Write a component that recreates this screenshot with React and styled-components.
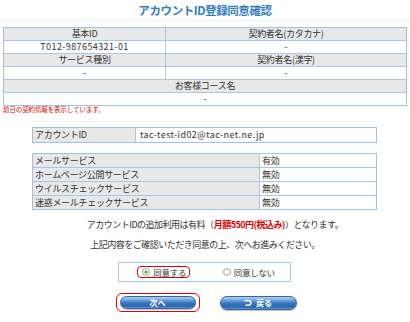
import React from 'react';
import styled, { createGlobalStyle } from 'styled-components';

const Global = createGlobalStyle`
  html, body { margin: 0; padding: 0; background: #fff; }
  body { font-family: "Noto Sans CJK JP", "Noto Sans", sans-serif; color: #333; }
`;

const Page = styled.div`
  width: 410px;
  height: 322px;
  overflow: hidden;
  display: flex;
  flex-direction: column;
`;

const Title = styled.h1`
  margin: 0;
  height: 20px;
  border-bottom: 1px solid #e9eff5;
  font-size: 11.5px;
  line-height: 20px;
  font-weight: 700;
  color: #2f7cc5;
  text-align: center;
  letter-spacing: -0.4px;
`;

const Grid = styled.div`
  display: grid;
  grid-template-columns: ${(p) => p.$cols};
  grid-auto-rows: ${(p) => p.$row}px;
  gap: 1px;
  background: #a4c8e8;
  border: 1px solid #9cc2e6;
  margin: ${(p) => p.$margin};
  width: ${(p) => p.$width}px;
  box-sizing: border-box;
`;

const Cell = styled.div`
  background: ${(p) => (p.$head ? '#e8e8e8' : '#fff')};
  grid-column: ${(p) => (p.$full ? '1 / -1' : 'auto')};
  text-align: ${(p) => (p.$left ? 'left' : 'center')};
  padding-left: ${(p) => (p.$left ? p.$pad || 2 : 0)}px;
  font-size: 9px;
  line-height: ${(p) => p.$lh || 12}px;
  letter-spacing: ${(p) => (p.$latin ? '0.4px' : '-0.3px')};
  color: #333;
  white-space: nowrap;
  overflow: hidden;
`;

const Note = styled.div`
  margin: 0 0 0 3px;
  font-size: 6.4px;
  line-height: 8px;
  color: #d40000;
`;

const Faint = styled.div`
  margin: 7px 0 0 32px;
  width: 345px;
  height: 1px;
  background: #eef3f8;
`;

const Message = styled.p`
  margin: ${(p) => p.$mt}px 0 0;
  font-size: 9px;
  line-height: 12px;
  letter-spacing: -0.5px;
  text-align: center;
  color: #333;
  padding-left: ${(p) => p.$shift || 0}px;
`;

const Price = styled.span`
  color: #e00000;
  font-weight: 700;
`;

const RadioBox = styled.div`
  margin: 11px 0 0 118px;
  width: 173px;
  height: 20px;
  box-sizing: border-box;
  border: 1px solid #a4c8e8;
  display: grid;
  grid-template-columns: 1fr 1fr;
  align-items: center;
  justify-items: center;
`;

const Option = styled.label`
  display: flex;
  align-items: center;
  gap: 3px;
  height: 12px;
  box-sizing: border-box;
  padding: 0 3px 0 4px;
  border: 1px solid ${(p) => (p.$marked ? '#e00000' : 'transparent')};
  border-radius: 4px;
  font-size: 8.5px;
  letter-spacing: -0.3px;
  color: #333;
  margin-left: ${(p) => p.$ml || 0}px;
`;

const Buttons = styled.div`
  margin-top: 11px;
  display: flex;
  justify-content: center;
  align-items: center;
  gap: 20px;
  padding-left: 2px;
`;

const Focus = styled.div`
  width: 84px;
  height: 19px;
  box-sizing: border-box;
  border: 1.5px solid #e00000;
  border-radius: 6px;
  display: flex;
  align-items: center;
  justify-content: center;
`;

const Pill = styled.button`
  width: ${(p) => p.$w}px;
  height: ${(p) => p.$h}px;
  box-sizing: border-box;
  padding: 0;
  border: 1px solid #2f64a4;
  border-radius: 7px;
  background: linear-gradient(#b3d1f0 0%, #6b9fdb 30%, #3574bf 55%, #2b66ae 85%, #6a9ed8 100%);
  color: #fff;
  font-family: "Noto Sans CJK JP", sans-serif;
  font-size: 8px;
  font-weight: 700;
  display: flex;
  align-items: center;
  justify-content: center;
  gap: 4px;
  box-shadow: 0 1px 1px rgba(0, 0, 0, 0.25);
`;

const RadioIcon = ({ checked }) => (
  <svg width="8" height="8" viewBox="0 0 8 8">
    <circle cx="4" cy="4" r="3.4" fill="#fff" stroke="#8a8a8a" strokeWidth="0.8" />
    {checked && <circle cx="4" cy="4" r="1.6" fill="#3aa83a" />}
  </svg>
);

const BackIcon = () => (
  <svg width="8" height="8" viewBox="0 0 8 8">
    <path d="M1.5 1.6 H4.6 A2.3 2.3 0 0 1 4.6 6.3 H1.6" fill="none" stroke="#fff" strokeWidth="1.4" />
    <path d="M0.3 1.6 L2.4 0.2 L2.4 3 Z" fill="#fff" />
  </svg>
);

const services = [
  { name: 'メールサービス', state: '有効' },
  { name: 'ホームページ公開サービス', state: '無効' },
  { name: 'ウイルスチェックサービス', state: '無効' },
  { name: '迷惑メールチェックサービス', state: '無効' },
];

export default function App() {
  return (
    <Page>
      <Global />
      <Title>アカウントID登録同意確認</Title>

      <Grid $cols="161px 240px" $row={12} $width={404} $margin="6px 0 0 3px">
        <Cell $head>基本ID</Cell>
        <Cell $head>契約者名(カタカナ)</Cell>
        <Cell $latin>T012-987654321-01</Cell>
        <Cell>-</Cell>
        <Cell $head>サービス種別</Cell>
        <Cell $head>契約者名(漢字)</Cell>
        <Cell>-</Cell>
        <Cell>-</Cell>
        <Cell $head $full>お客様コース名</Cell>
        <Cell $full>-</Cell>
      </Grid>

      <Note>前日の契約情報を表示しています。</Note>
      <Faint />

      <Grid $cols="102px 240px" $row={14} $width={345} $margin="5px 0 0 32px">
        <Cell $head $left $lh={14}>アカウントID</Cell>
        <Cell $left $latin $pad={4} $lh={14}>tac-test-id02@tac-net.ne.jp</Cell>
      </Grid>

      <Grid $cols="226px 116px" $row={13} $width={345} $margin="10px 0 0 32px">
        {services.map((s) => (
          <React.Fragment key={s.name}>
            <Cell $head $left $lh={13}>{s.name}</Cell>
            <Cell $left $lh={13}>{s.state}</Cell>
          </React.Fragment>
        ))}
      </Grid>

      <Message $mt={9} $shift={20}>
        アカウントIDの追加利用は有料（<Price>月額550円(税込み)</Price>）となります。
      </Message>
      <Message $mt={8}>上記内容をご確認いただき同意の上、次へお進みください。</Message>

      <RadioBox>
        <Option $marked $ml={4}>
          <RadioIcon checked />
          同意する
        </Option>
        <Option $ml={2}>
          <RadioIcon />
          同意しない
        </Option>
      </RadioBox>

      <Buttons>
        <Focus>
          <Pill $w={76} $h={13}>次へ</Pill>
        </Focus>
        <Pill $w={77} $h={14}>
          <BackIcon />
          戻る
        </Pill>
      </Buttons>
    </Page>
  );
}
